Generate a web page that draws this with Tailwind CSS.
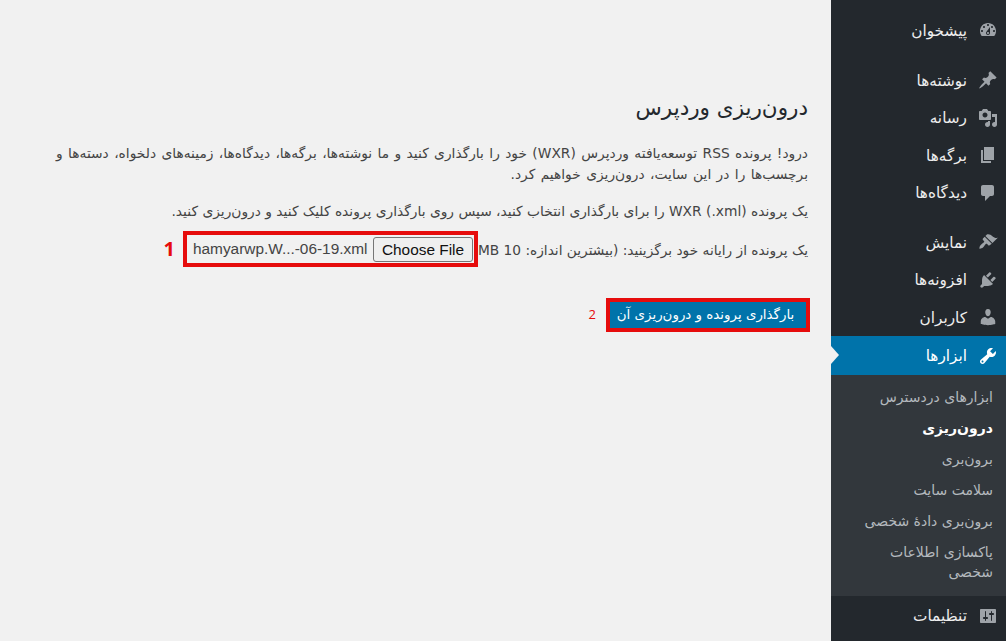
<!DOCTYPE html>
<html lang="fa" dir="rtl">
<head>
    <meta charset="UTF-8">
    <title>درون‌ریزی وردپرس</title>
    <script src="https://cdn.jsdelivr.net/npm/@tailwindcss/browser@4"></script>
</head>
<body class="bg-[#f1f1f1] font-['DejaVu_Sans',sans-serif] overflow-hidden">
<div class="flex h-[641px] w-[1006px]">
    <!-- Sidebar -->
    <aside class="w-[175px] h-full shrink-0 bg-[#23282d] text-[15.3px] text-[#eeeeee]">
        <ul class="pt-[11px]">
            <li class="flex items-center h-[38px] pr-[8px] gap-[11px]">
                <svg class="w-5 h-5 fill-[#9ea3a8]" viewBox="0 0 20 20"><path d="M3.76 16h12.48c1.1-1.37 1.76-3.11 1.76-5 0-4.42-3.58-8-8-8s-8 3.58-8 8c0 1.89.66 3.63 1.76 5zM10 4c.55 0 1 .45 1 1s-.45 1-1 1-1-.45-1-1 .45-1 1-1zM6 6c.55 0 1 .45 1 1s-.45 1-1 1-1-.45-1-1 .45-1 1-1zm8 0c.55 0 1 .45 1 1s-.45 1-1 1-1-.45-1-1 .45-1 1-1zm-5.37 5.55L12 7v6c0 1.1-.9 2-2 2s-2-.9-2-2c0-.57.24-1.08.63-1.45zM4 10c.55 0 1 .45 1 1s-.45 1-1 1-1-.45-1-1 .45-1 1-1zm12 0c.55 0 1 .45 1 1s-.45 1-1 1-1-.45-1-1 .45-1 1-1zm-5 3c0-.55-.45-1-1-1s-1 .45-1 1 .45 1 1 1 1-.45 1-1z"/></svg>
                <span class="pt-[2px]">پیشخوان</span>
            </li>
            <li class="flex items-center h-[38px] mt-[12px] pr-[8px] gap-[11px]">
                <svg class="w-5 h-5 fill-[#9ea3a8]" viewBox="0 0 20 20"><path d="M10.44 3.02l1.82-1.82 6.36 6.35-1.83 1.82c-1.05-.68-2.48-.57-3.41.36l-.75.75c-.92.93-1.04 2.35-.35 3.41l-1.83 1.82-2.41-2.41-2.8 2.79c-.42.42-3.38 2.71-3.8 2.29s1.86-3.39 2.28-3.81l2.79-2.79L4.1 9.36l1.83-1.82c1.05.69 2.48.57 3.4-.36l.75-.75c.93-.92 1.05-2.35.36-3.41z"/></svg>
                <span class="pt-[2px]">نوشته‌ها</span>
            </li>
            <li class="flex items-center h-[37.5px] pr-[8px] gap-[11px]">
                <svg class="w-5 h-5 fill-[#9ea3a8]" viewBox="0 0 20 20"><path d="M13 11V4c0-.55-.45-1-1-1h-1.67L9 1H5L3.67 3H2c-.55 0-1 .45-1 1v7c0 .55.45 1 1 1h10c.55 0 1-.45 1-1zM7 4.5c1.38 0 2.5 1.12 2.5 2.5S8.38 9.5 7 9.5 4.5 8.38 4.5 7 5.62 4.5 7 4.5zM14 6h5v10.5c0 1.38-1.12 2.5-2.5 2.5S14 17.88 14 16.5s1.12-2.5 2.5-2.5c.17 0 .34.02.5.05V9h-3V6zm-4 8.05V13h2v3.5c0 1.38-1.12 2.5-2.5 2.5S7 17.88 7 16.5 8.12 14 9.5 14c.17 0 .34.02.5.05z"/></svg>
                <span class="pt-[2px]">رسانه</span>
            </li>
            <li class="flex items-center h-[37.5px] pr-[8px] gap-[11px]">
                <svg class="w-5 h-5 fill-[#9ea3a8]" viewBox="0 0 20 20"><path d="M6 15V2h10v13H6zm-1 1h8v2H3V5h2v11z"/></svg>
                <span class="pt-[2px]">برگه‌ها</span>
            </li>
            <li class="flex items-center h-[37.5px] pr-[8px] gap-[11px]">
                <svg class="w-5 h-5 fill-[#9ea3a8]" viewBox="0 0 20 20"><path d="M5 2h9c1.1 0 2 .9 2 2v7c0 1.1-.9 2-2 2h-2l-5 5v-5H5c-1.1 0-2-.9-2-2V4c0-1.1.9-2 2-2z"/></svg>
                <span class="pt-[2px]">دیدگاه‌ها</span>
            </li>
            <li class="flex items-center h-[37.5px] mt-[12px] pr-[8px] gap-[11px]">
                <svg class="w-5 h-5 fill-[#9ea3a8]" viewBox="0 0 20 20"><path d="M14.48 11.06L7.41 3.99l1.5-1.5c.5-.56 2.3-.47 3.51.32 1.21.8 1.43 1.28 2.91 2.1 1.18.64 2.45 1.26 4.45.85zm-.71.71L6.7 4.7 4.93 6.47c-.39.39-.39 1.02 0 1.41l1.06 1.06c.39.39.39 1.03 0 1.42-.6.6-1.43 1.11-2.21 1.69-.35.26-.7.53-1.01.84-1.43 1.43-1.4 3.09-1.3 3.75.66.1 2.32.13 3.75-1.3.31-.31.58-.66.84-1.01.58-.78 1.09-1.61 1.69-2.21.39-.39 1.03-.39 1.42 0l1.06 1.06c.39.39 1.02.39 1.41 0z"/></svg>
                <span class="pt-[2px]">نمایش</span>
            </li>
            <li class="flex items-center h-[37.5px] pr-[8px] gap-[11px]">
                <svg class="w-5 h-5 fill-[#9ea3a8]" viewBox="0 0 20 20"><path d="M13.11 4.36L9.87 7.6 8 5.73l3.24-3.24c.35-.34 1.05-.2 1.56.32.52.51.66 1.21.31 1.55zm-8 1.77l.91-1.12 9.01 9.01-1.19.84c-.71.71-2.63 1.16-3.82 1.16H6.14L4.9 17.26c-.59.59-1.54.59-2.12 0-.59-.58-.59-1.53 0-2.12l1.24-1.24v-3.88c0-1.13.4-3.19 1.09-3.89zm7.26 3.97l3.24-3.24c.34-.35 1.04-.21 1.55.31.52.51.66 1.21.31 1.55l-3.24 3.25z"/></svg>
                <span class="pt-[2px]">افزونه‌ها</span>
            </li>
            <li class="flex items-center h-[37.5px] pr-[8px] gap-[11px]">
                <svg class="w-5 h-5 fill-[#9ea3a8]" viewBox="0 0 20 20"><path d="M10 9.25c-2.27 0-2.73-3.44-2.73-3.44C7 4.02 7.82 2 9.97 2c2.16 0 2.98 2.02 2.71 3.81 0 0-.41 3.44-2.68 3.44zm0 2.57L12.72 10c2.39 0 4.52 2.33 4.52 4.53v2.49s-3.65 1.13-7.24 1.13c-3.65 0-7.24-1.13-7.24-1.13v-2.49c0-2.25 1.94-4.48 4.47-4.48z"/></svg>
                <span class="pt-[2px]">کاربران</span>
            </li>
            <li class="relative flex items-center h-[39px] pr-[8px] gap-[11px] bg-[#0073aa] text-white">
                <svg class="w-5 h-5 fill-white" viewBox="0 0 20 20"><path d="M16.68 9.77c-1.34 1.34-3.3 1.67-4.95.99l-5.41 6.52c-.99.99-2.59.99-3.58 0s-.99-2.59 0-3.57l6.52-5.42c-.68-1.65-.35-3.61.99-4.95 1.28-1.28 3.12-1.62 4.72-1.06l-2.89 2.89 2.82 2.82 2.86-2.87c.53 1.58.18 3.39-1.08 4.65zM3.81 16.21c.4.39 1.04.39 1.43 0 .4-.4.4-1.04 0-1.43-.39-.4-1.03-.4-1.43 0-.39.39-.39 1.03 0 1.43z"/></svg>
                <span class="pt-[2px]">ابزارها</span>
                <div class="absolute left-0 top-[10px] w-0 h-0 border-y-[9px] border-y-transparent border-l-[8px] border-l-[#f1f1f1]"></div>
            </li>
        </ul>
        <ul class="bg-[#32373c] text-[14px] text-[#b4b9be] pt-[7px] pb-[9px] pr-[13px] pl-[24px]">
            <li class="h-[31px] leading-[31px]">ابزارهای دردسترس</li>
            <li class="h-[31px] leading-[31px] font-bold text-white">درون‌ریزی</li>
            <li class="h-[31px] leading-[31px]">برون‌بری</li>
            <li class="h-[31px] leading-[31px]">سلامت سایت</li>
            <li class="h-[31px] leading-[31px] whitespace-nowrap">برون‌بری دادهٔ شخصی</li>
            <li class="leading-[20px] py-[5px]">پاکسازی اطلاعات شخصی</li>
        </ul>
        <ul>
            <li class="flex items-center h-[39px] pr-[8px] gap-[11px]">
                <svg class="w-5 h-5 fill-[#9ea3a8]" viewBox="0 0 20 20"><path d="M18 16V4c0-.55-.45-1-1-1H3c-.55 0-1 .45-1 1v12c0 .55.45 1 1 1h14c.55 0 1-.45 1-1zM8 11h1c.55 0 1 .45 1 1s-.45 1-1 1H8v1.5c0 .28-.22.5-.5.5s-.5-.22-.5-.5V13H6c-.55 0-1-.45-1-1s.45-1 1-1h1V5.5c0-.28.22-.5.5-.5s.5.22.5.5V11zm5-2h-1c-.55 0-1-.45-1-1s.45-1 1-1h1V5.5c0-.28.22-.5.5-.5s.5.22.5.5V7h1c.55 0 1 .45 1 1s-.45 1-1 1h-1v5.5c0 .28-.22.5-.5.5s-.5-.22-.5-.5V9z"/></svg>
                <span class="pt-[2px]">تنظیمات</span>
            </li>
        </ul>
    </aside>

    <!-- Main content -->
    <main class="flex-1 pt-[93px] pr-[23px] pl-[50px] text-[13.8px] text-[#444444]">
        <h1 class="text-[21.5px] leading-[29px] font-normal text-[#23282d]">درون‌ریزی وردپرس</h1>
        <p class="mt-[21px] leading-[21px] [word-spacing:1px]">درود! پرونده RSS توسعه‌یافته وردپرس (WXR) خود را بارگذاری کنید و ما نوشته‌ها، برگه‌ها، دیدگاه‌ها، زمینه‌های دلخواه، دسته‌ها و برچسب‌ها را در این سایت، درون‌ریزی خواهیم کرد.</p>
        <p class="mt-[16px] leading-[21px]">یک پرونده WXR (.xml) را برای بارگذاری انتخاب کنید، سپس روی بارگذاری پرونده کلیک کنید و درون‌ریزی کنید.</p>
        <div class="mt-[9px] flex items-center">
            <span class="whitespace-nowrap pt-[3px] text-[13.72px]">یک پرونده از رایانه خود برگزینید: (بیشترین اندازه: 10 MB</span>
            <div dir="ltr" class="shrink-0 flex items-center justify-between h-[36px] w-[295px] border-4 border-[#e60c0c] font-['Liberation_Sans',sans-serif] text-[15.4px] pl-[6px] pr-[1px]">
                <span class="whitespace-nowrap">hamyarwp.W...-06-19.xml</span>
                <button class="h-[25px] w-[100px] bg-[#efefef] border border-[#767676] rounded-[3px] text-[#111111]">Choose File</button>
            </div>
            <span class="mr-[8px] font-['Open_Sans',sans-serif] font-bold text-[20px] text-[#e60c0c]">1</span>
        </div>
        <div class="mt-[31px] -mr-[2px] flex items-center">
            <div class="border-4 border-[#e60c0c] h-[34px] w-[204px]">
                <button class="w-full h-full bg-[#0073aa] text-white text-[13.4px] whitespace-nowrap pr-[5px] pt-[1px]">بارگذاری پرونده و درون‌ریزی آن</button>
            </div>
            <span class="mr-[10px] font-['Open_Sans',sans-serif] text-[13px] text-[#e60c0c]">2</span>
        </div>
    </main>
</div>
</body>
</html>
